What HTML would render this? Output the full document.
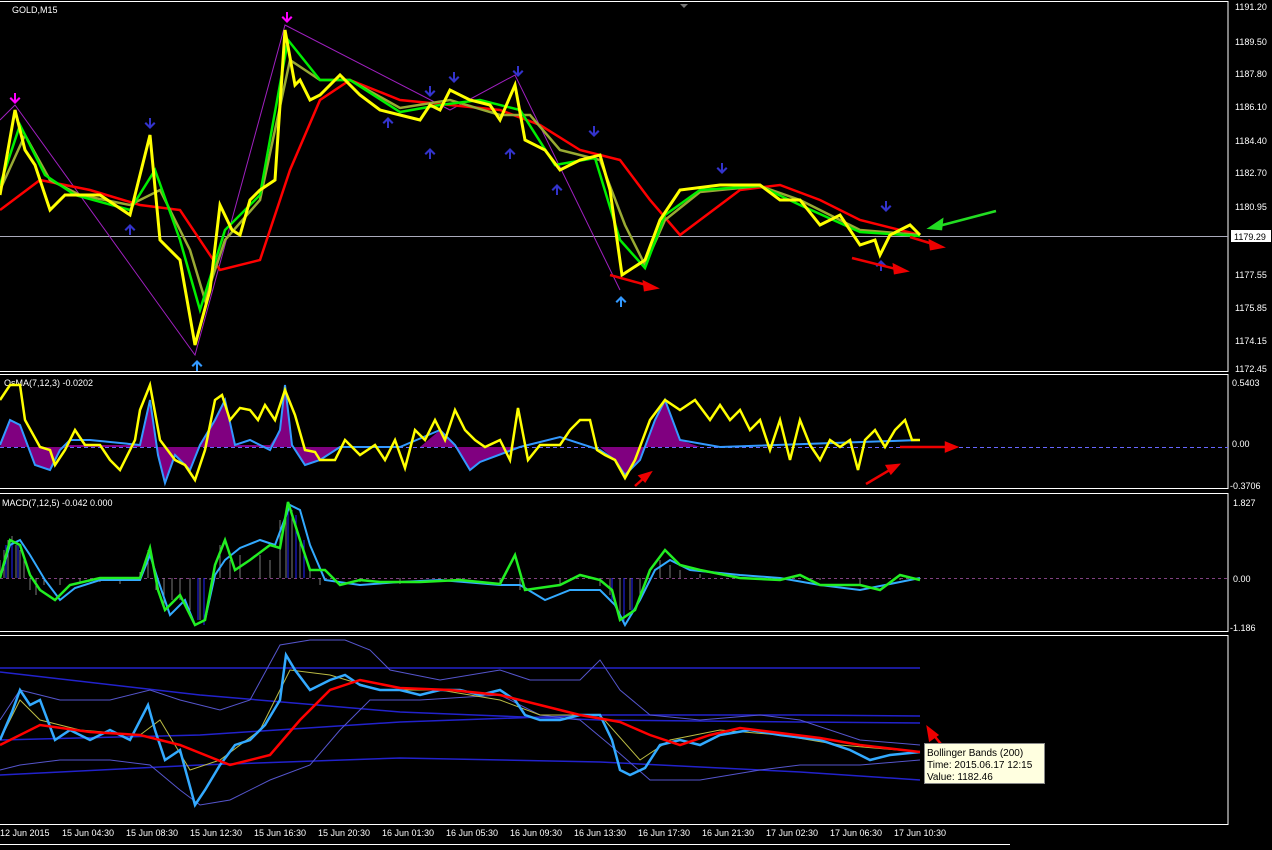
<!DOCTYPE html>
<html><head><style>
body{margin:0;background:#000;width:1272px;height:845px;overflow:hidden;font-family:"Liberation Sans",sans-serif}
svg text{font-family:"Liberation Sans",sans-serif;font-size:9px;fill:#fff}
</style></head><body>
<svg width="1272" height="845" xmlns="http://www.w3.org/2000/svg">
<defs>
<path id="dn" d="M-1 -7h2v7l3-3 1.5 1.5L0 4-5.5-1.5-4-3l3 3z"/>
<path id="up" d="M-1 7h2v-7l3 3 1.5-1.5L0-4-5.5 1.5-4 3l3-3z"/>
</defs>
<rect width="1272" height="845" fill="#000"/>
<g fill="none" stroke="#fff" stroke-width="1">
<rect x="-1" y="1.5" width="1229" height="370"/>
<rect x="-1" y="374.5" width="1229" height="114"/>
<rect x="-1" y="493.5" width="1229" height="138"/>
<rect x="-1" y="635.5" width="1229" height="189"/>
</g>
<path d="M680 4 l4 4 4-4z" fill="#777"/>
<g>
<text x="1235" y="10">1191.20</text><text x="1235" y="45">1189.50</text><text x="1235" y="77">1187.80</text>
<text x="1235" y="110">1186.10</text><text x="1235" y="144">1184.40</text><text x="1235" y="176">1182.70</text>
<text x="1235" y="210">1180.95</text><text x="1235" y="278">1177.55</text><text x="1235" y="311">1175.85</text>
<text x="1235" y="344">1174.15</text><text x="1235" y="372">1172.45</text>
<text x="1232" y="386">0.5403</text><text x="1232" y="447">0.00</text><text x="1230" y="489">-0.3706</text>
<text x="1233" y="506">1.827</text><text x="1233" y="582">0.00</text><text x="1230" y="631">-1.186</text>
</g>
<line x1="0" y1="236.5" x2="1228" y2="236.5" stroke="#aab" stroke-width="1"/>
<rect x="1231" y="230" width="40" height="12" fill="#fff"/><text x="1234" y="240" style="fill:#000">1179.29</text>
<text x="12" y="13">GOLD,M15</text>
<text x="4" y="386">OsMA(7,12,3) -0.0202</text>
<text x="2" y="506">MACD(7,12,5) -0.042 0.000</text>
<polyline fill="none" stroke="#a020c0" stroke-width="1" points="0,120 15,105 195,355 285,25 450,110 515,75 620,290"/>
<polyline fill="none" stroke="#f00" stroke-width="2.5" points="0,210 40,180 90,190 140,205 180,210 220,270 260,260 290,170 320,100 350,80 400,100 450,105 500,110 540,125 580,150 620,160 650,200 680,235 700,220 740,190 780,185 820,200 860,220 920,235"/>
<polyline fill="none" stroke="#9a3" stroke-width="2.5" points="0,190 25,135 50,180 80,195 130,205 160,190 190,250 205,300 225,240 260,200 290,60 320,80 350,80 400,108 450,100 500,115 530,115 560,150 600,160 625,225 645,265 665,220 700,192 760,186 800,200 860,230 920,235"/>
<polyline fill="none" stroke="#0e0" stroke-width="2.5" points="0,185 20,125 45,175 75,195 130,210 155,170 180,240 200,310 225,230 260,195 288,40 320,80 350,80 400,112 440,105 480,100 520,110 555,165 595,158 620,240 645,268 665,215 700,190 760,186 800,205 860,232 920,236"/>
<polyline fill="none" stroke="#ff0" stroke-width="3" points="0,195 15,110 25,150 35,165 50,210 65,195 100,195 130,215 150,135 160,240 180,260 195,345 210,290 220,205 232,230 240,235 250,200 260,190 275,180 285,30 295,85 300,80 310,100 320,95 340,75 360,95 380,110 400,115 420,120 430,105 440,110 450,90 470,100 490,105 500,120 515,85 525,140 545,150 560,170 580,160 600,155 610,190 622,275 645,260 660,220 680,190 720,185 760,185 780,200 800,200 820,225 840,215 860,245 875,240 880,255 890,235 900,230 910,225 920,235"/>
<g fill="#f0f"><use href="#dn" x="15" y="100"/><use href="#dn" x="287" y="19"/></g>
<g fill="#33c">
<use href="#dn" x="150" y="125"/><use href="#dn" x="430" y="93"/><use href="#dn" x="454" y="79"/><use href="#dn" x="518" y="73"/>
<use href="#dn" x="594" y="133"/><use href="#dn" x="722" y="170"/><use href="#dn" x="886" y="208"/>
<use href="#up" x="130" y="228"/><use href="#up" x="430" y="152"/><use href="#up" x="388" y="121"/><use href="#up" x="510" y="152"/>
<use href="#up" x="557" y="188"/><use href="#up" x="881" y="264"/>
</g>
<g fill="#39f"><use href="#up" x="197" y="364"/><use href="#up" x="621" y="300"/></g>
<g stroke-width="2.5" fill="none">
<line x1="996" y1="211" x2="935" y2="227" stroke="#2d2"/><path d="M930 228 l12-8 -1 9z" fill="#2d2" stroke="#2d2"/>
<line x1="610" y1="275" x2="650" y2="286" stroke="#e00"/><path d="M656 288 l-12-6 1 8z" fill="#e00" stroke="#e00"/>
<line x1="852" y1="258" x2="900" y2="270" stroke="#e00"/><path d="M906 271 l-12-6 1 8z" fill="#e00" stroke="#e00"/>
<line x1="910" y1="237" x2="936" y2="245" stroke="#e00"/><path d="M942 247 l-12-6 1 8z" fill="#e00" stroke="#e00"/>
</g>
<line x1="0" y1="447.5" x2="1228" y2="447.5" stroke="#66f" stroke-dasharray="4,3"/>
<polygon fill="#800080" points="0,447 10,420 20,425 35,465 50,470 60,450 70,445 140,445 150,400 158,455 165,480 175,455 190,470 200,445 215,420 225,400 235,445 270,445 280,430 285,385 292,445 305,465 320,460 340,447 420,447 440,430 455,445 470,470 480,462 520,447 600,447 615,460 625,475 640,460 655,420 665,400 680,440 700,447 920,447"/>
<polyline fill="none" stroke="#39f" stroke-width="2" points="0,445 10,420 20,425 35,465 50,470 60,450 70,440 90,440 140,445 150,400 158,455 165,483 175,455 190,470 200,445 215,420 225,400 235,445 250,440 270,450 280,430 285,385 292,445 305,465 320,460 340,447 400,447 440,430 455,445 470,470 480,462 520,447 560,437 600,450 615,460 625,475 640,460 655,420 665,400 680,440 720,447 920,440"/>
<polyline fill="none" stroke="#ff0" stroke-width="2.5" points="0,400 10,385 20,385 25,420 40,447 50,450 55,465 65,450 75,430 85,445 100,445 110,460 120,470 135,440 140,410 150,385 160,440 175,460 185,465 195,480 205,450 215,400 222,395 230,420 240,408 250,410 258,420 265,405 275,420 285,390 295,415 305,450 315,452 320,460 335,460 345,440 360,455 375,445 385,460 395,440 405,468 415,430 425,440 435,420 445,440 455,410 465,430 475,440 485,447 500,440 510,460 518,408 528,460 540,445 560,445 570,430 580,420 590,420 597,450 605,455 615,460 625,478 635,460 650,420 665,400 680,410 695,400 710,420 720,405 730,420 740,410 750,430 760,420 770,450 780,420 790,460 800,420 810,445 820,460 830,440 840,447 850,440 858,470 865,440 875,430 885,447 895,430 905,420 912,440 920,440"/>
<g stroke="#e00" stroke-width="2.5" fill="none">
<line x1="900" y1="447" x2="950" y2="447"/><path d="M956 447 l-10-4 0 8z" fill="#e00"/>
<line x1="866" y1="484" x2="893" y2="468"/><path d="M898 465 l-11 1 4 7z" fill="#e00"/>
<line x1="635" y1="486" x2="645" y2="477"/><path d="M650 473 l-10 3 5 5z" fill="#e00"/>
</g>
<line x1="0" y1="578.5" x2="1228" y2="578.5" stroke="#804080" stroke-dasharray="3,3"/>
<g stroke="#888" stroke-width="1" opacity="0.9">
<path d="M0 578V560M4 578V550M8 578V540M12 578V536M16 578V545M20 578V550M24 578V560M30 578V590M36 578V595M44 578V585M60 578V585M80 578V582M100 578V582M120 578V584M140 578V572M148 578V550M156 578V590M164 578V608M172 578V600M180 578V600M190 578V610M200 578V620M210 578V580M220 578V545M230 578V560M240 578V555M260 578V555M270 578V560M280 578V520M286 578V510M292 578V510M300 578V540M310 578V570M320 578V585M360 578V582M400 578V584M460 578V582M500 578V584M520 578V590M560 578V584M600 578V586M610 578V595M620 578V620M630 578V610M640 578V600M650 578V580M660 578V560M670 578V565M680 578V570M700 578V574M760 578V580M820 578V580M860 578V584M900 578V580"/>
</g>
<g stroke="#22f" stroke-width="1">
<path d="M6 578V545M12 578V540M18 578V545M198 578V620M204 578V625M288 578V505M296 578V515M304 578V540M612 578V600M624 578V625M632 578V615"/>
</g>
<polyline fill="none" stroke="#3af" stroke-width="2" points="0,578 10,545 20,540 30,555 45,580 60,600 75,588 100,580 140,580 150,555 158,580 170,615 185,600 195,625 205,620 215,575 225,560 240,548 260,540 275,545 290,505 300,510 310,545 325,580 360,585 400,582 440,580 500,585 520,585 545,600 570,590 600,590 615,605 625,625 640,600 655,570 670,560 690,570 740,575 780,578 820,585 860,590 920,578"/>
<polyline fill="none" stroke="#2e2" stroke-width="2.5" points="0,578 10,540 20,545 30,575 40,590 55,600 70,585 100,578 140,578 150,548 158,590 165,610 180,595 195,625 205,620 215,565 225,540 235,570 250,560 270,545 280,548 288,502 300,540 310,570 325,570 340,585 360,580 380,582 420,582 460,580 500,584 515,555 525,590 560,585 580,575 600,580 612,590 620,620 635,610 650,570 665,550 680,565 700,570 740,578 780,580 800,575 820,585 860,585 880,590 900,575 920,580"/>
<g fill="none" stroke-width="1.5">
<polyline stroke="#22c" points="0,672 200,695 400,712 600,720 800,722 920,723"/>
<polyline stroke="#22c" points="0,740 200,735 400,722 600,715 800,715 920,716"/>
<polyline stroke="#22c" points="0,775 200,765 400,758 600,762 800,772 920,780"/>
<polyline stroke="#22c" points="0,668 920,668"/>
</g>
<g fill="none" stroke="#55c" stroke-width="1">
<polyline points="0,720 20,690 60,700 110,700 150,690 180,700 220,710 250,700 280,645 310,640 345,640 370,650 390,670 440,680 500,670 530,680 580,680 600,660 620,690 650,715 700,720 760,715 800,720 860,740 920,745"/>
<polyline points="0,770 20,765 60,760 110,760 150,765 180,790 200,805 230,800 270,780 310,765 340,730 370,700 420,700 500,695 540,715 580,720 610,745 650,780 700,780 760,770 800,765 860,765 920,760"/>
</g>
<polyline fill="none" stroke="#bb4" stroke-width="1" points="0,740 20,700 40,720 80,730 140,735 160,720 190,770 220,760 260,730 290,670 330,675 380,690 440,690 500,700 540,715 600,715 640,760 670,740 720,730 780,735 840,745 920,752"/>
<polyline fill="none" stroke="#3af" stroke-width="2.5" points="0,740 12,712 20,690 30,705 40,700 55,740 70,730 90,740 110,730 130,740 148,705 155,730 165,760 180,750 195,805 205,790 220,765 235,745 250,740 265,725 280,700 286,655 295,670 310,690 330,680 345,675 360,685 380,690 400,690 420,695 440,690 460,690 480,695 500,690 515,700 525,715 540,720 560,720 580,715 600,715 612,740 620,770 630,775 645,768 660,745 680,740 700,745 720,735 750,730 780,735 820,740 850,750 870,760 890,755 920,752"/>
<polyline fill="none" stroke="#f00" stroke-width="2.5" points="0,745 40,725 90,732 140,735 180,745 230,765 270,755 300,720 330,690 360,680 400,688 450,690 500,695 540,705 580,715 620,722 650,735 680,745 710,735 740,728 780,733 820,738 860,745 920,752"/>
<g stroke="#e00" stroke-width="2.5" fill="none">
<line x1="966" y1="775" x2="932" y2="733"/><path d="M928 728 l2 12 7-5z" fill="#e00"/>
</g>
<rect x="924.5" y="743.5" width="120" height="40" fill="#ffffe0" stroke="#888"/>
<text x="927" y="756" style="fill:#000;font-size:10px">Bollinger Bands (200)</text>
<text x="927" y="768" style="fill:#000;font-size:10px">Time: 2015.06.17 12:15</text>
<text x="927" y="780" style="fill:#000;font-size:10px">Value: 1182.46</text>
<g>
<text x="0" y="836">12 Jun 2015</text><text x="62" y="836">15 Jun 04:30</text><text x="126" y="836">15 Jun 08:30</text>
<text x="190" y="836">15 Jun 12:30</text><text x="254" y="836">15 Jun 16:30</text><text x="318" y="836">15 Jun 20:30</text>
<text x="382" y="836">16 Jun 01:30</text><text x="446" y="836">16 Jun 05:30</text><text x="510" y="836">16 Jun 09:30</text>
<text x="574" y="836">16 Jun 13:30</text><text x="638" y="836">16 Jun 17:30</text><text x="702" y="836">16 Jun 21:30</text>
<text x="766" y="836">17 Jun 02:30</text><text x="830" y="836">17 Jun 06:30</text><text x="894" y="836">17 Jun 10:30</text>
</g>
<line x1="0" y1="844.5" x2="1010" y2="844.5" stroke="#fff"/>
</svg>
</body></html>
